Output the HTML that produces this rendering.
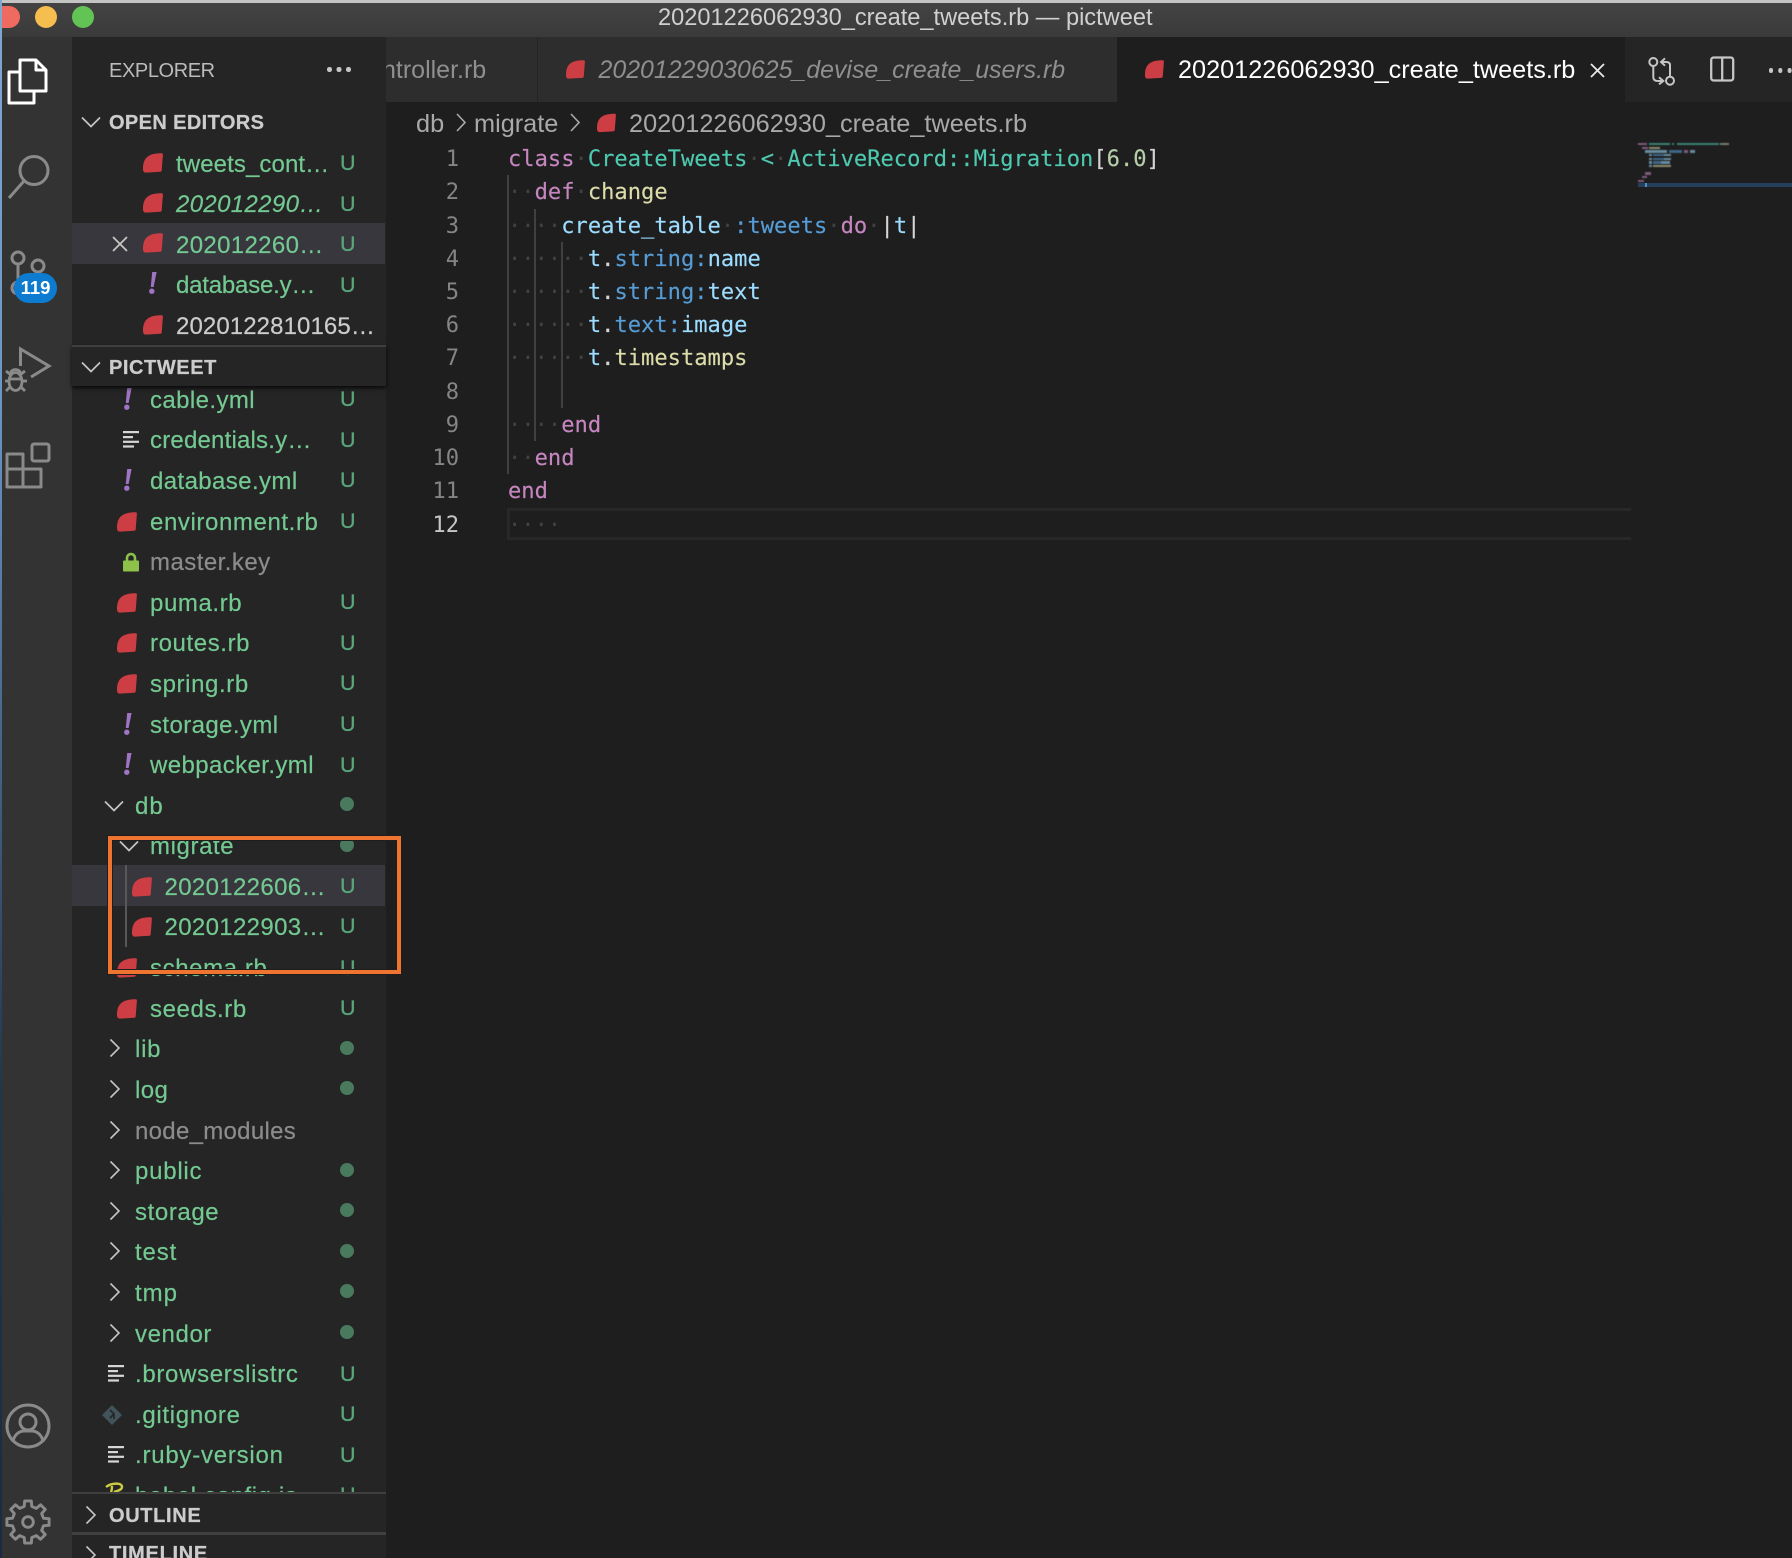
<!DOCTYPE html>
<html><head><meta charset="utf-8"><title>pictweet</title>
<style>
*{box-sizing:border-box}
html,body{margin:0;padding:0;background:#1e1e1e}
#app{position:relative;width:1792px;height:1558px;overflow:hidden;background:#1e1e1e;font-family:"Liberation Sans",sans-serif;color:#ccc}
.a{position:absolute;white-space:nowrap}
svg{position:absolute;overflow:visible}
.r{position:absolute;left:0;width:313px;height:40.6px;line-height:40.6px;font-size:24px;color:#73c991;white-space:nowrap}
.r .t{position:absolute;top:1px;letter-spacing:.6px;-webkit-text-stroke:.2px}
.l0 .t{left:63px}.l1 .t{left:78px}.l2 .t{left:92.5px;letter-spacing:.35px}.e .t{left:104px}
.r .u{position:absolute;left:268px;top:-.5px;font-size:21.5px;color:#5aa57a;-webkit-text-stroke:.3px}
.r .d{position:absolute;left:268px;top:11.5px;width:14px;height:14px;border-radius:50%;background:#4a7a5e}
.r svg.i{width:20px;height:20px;top:10px}
.l0 svg.i{left:30px}.l1 svg.i{left:45px}.l2 svg.i{left:60px}.e svg.i{left:71px}
.r svg.c{left:33px;top:9px;width:20px;height:20px}
.l1 svg.c{left:47px}
.l0 svg.dnn{left:32px;top:10px}.l1 svg.dnn{left:47px;top:10px}
.gy{color:#8c8c8c}
.r svg.x{width:8px;height:22px;top:8px}
.l1 svg.x{left:52px}.e svg.x{left:77px}
.h{position:absolute;left:37px;font-size:20px;font-weight:bold;color:#ccc;white-space:nowrap;-webkit-text-stroke:.25px}
pre{position:absolute;margin:0;left:508px;font:22.1px/33px "DejaVu Sans Mono",monospace;color:#d4d4d4;white-space:pre;-webkit-text-stroke:.15px}
.ws{color:#424242;-webkit-text-stroke:0}.k{color:#c586c0}.c{color:#4ec9b0}.f{color:#dcdcaa}.v{color:#9cdcfe}.b{color:#569cd6}.n{color:#b5cea8}
.ln{position:absolute;left:410px;width:49px;text-align:right;font:22.1px/33px "DejaVu Sans Mono",monospace;color:#858585}
.g{position:absolute;width:2px;background:#404040}
#mm{position:absolute;left:0;top:0;width:1792px;height:200px;filter:blur(.5px)}
.m{position:absolute;height:2.4px;opacity:.58}
</style></head><body>
<div id="app">
<svg width="0" height="0" style="position:absolute"><defs>
<symbol id="rb" viewBox="0 0 20 20"><path d="M18.6 .3 C19.6 .2 20 .9 19.9 2 L18.7 17.2 C18.6 18.3 18 18.7 17 18.8 L3 19.6 C1 19.7 0 18.4 0 16 C0 5 5 .3 18.6 .3 Z" fill="#cc3e44"/></symbol>
<symbol id="ls" viewBox="0 0 20 20"><g fill="#d4d7d6"><rect x="2" y="2" width="16" height="2.2"/><rect x="2" y="7" width="10" height="2.2"/><rect x="2" y="11.7" width="16" height="2.2"/><rect x="2" y="16.4" width="11" height="2.2"/></g></symbol>
<symbol id="dn" viewBox="0 0 20 20"><path d="M1 5.5 L10 14.5 L19 5.5" fill="none" stroke="#c5c5c5" stroke-width="1.7"/></symbol>
<symbol id="rt" viewBox="0 0 20 20"><path d="M5.5 1.5 L14 10 L5.5 18.5" fill="none" stroke="#c5c5c5" stroke-width="1.6"/></symbol>
<symbol id="ex" viewBox="0 0 8 22"><path d="M3.2 0 H7.6 L4.6 15 H1.8 Z" fill="#a074c4"/><circle cx="2.8" cy="19.2" r="2.7" fill="#a074c4"/></symbol>
</defs></svg>

<!-- title bar -->
<div class="a" style="left:0;top:0;width:1792px;height:37px;background:linear-gradient(#444,#3a3a3a)"></div>
<div class="a" style="left:0;top:0;width:1792px;height:3px;background:#c4c4c4"></div>
<div class="a" style="left:2px;top:6px;width:18px;height:22px;border-radius:0 11px 11px 0;background:#ef6b60"></div>
<div class="a" style="left:35px;top:6px;width:22px;height:22px;border-radius:50%;background:#f6bd4f"></div>
<div class="a" style="left:72px;top:6px;width:22px;height:22px;border-radius:50%;background:#61c454"></div>
<div class="a" style="left:658px;top:3px;line-height:30px;font-size:23.6px;color:#d0d0d0">20201226062930_create_tweets.rb — pictweet</div>

<!-- activity bar -->
<div class="a" style="left:0;top:37px;width:72px;height:1521px;background:#333"></div>
<div class="a" style="left:0;top:0;width:2px;height:1558px;background:linear-gradient(#7fa8d0 0,#6b97c6 25%,#20364f 70%,#1a2a44 100%)"></div>
<svg style="left:0;top:0" width="72" height="1558" fill="none">
<g stroke="#fff" stroke-width="3" stroke-linejoin="round">
<path d="M20 72 H9 V103 H34 V92"/>
<path d="M20 60 H36 L46 70 V91 H20 Z"/><path d="M36 60 V70 H46"/>
</g>
<g stroke="#8a8a8a" stroke-width="3">
<circle cx="34" cy="170.5" r="14"/><path d="M24 181 L9 198"/>
<circle cx="18" cy="258" r="6"/><circle cx="38" cy="266" r="6"/><circle cx="18" cy="288" r="6"/><path d="M18 264 V282"/>
<path d="M20.5 366 V349 L49 366 L31 377"/>
</g>
<g stroke="#8a8a8a" stroke-width="2.8">
<ellipse cx="15.5" cy="381.5" rx="6.5" ry="9"/><path d="M9 379 H22"/><path d="M10.5 374 C10.5 368 20.5 368 20.5 374"/>
<path d="M6 371 L11 375 M25 371 L20 375 M5 381 H9 M22 381 H27 M6 391 L10 387 M25 391 L21 387"/>
</g>
<g stroke="#8a8a8a" stroke-width="3" stroke-linejoin="round">
<rect x="32" y="444" width="17" height="17" rx="2"/>
<path d="M7 454 H23 V469 H41 V487 H7 Z"/><path d="M7 469 H23 V487"/>
</g>
<g stroke="#8a8a8a" stroke-width="3">
<circle cx="28" cy="1426" r="21"/><circle cx="28" cy="1422" r="8"/>
<path d="M13 1442 C14 1434 20 1431 24 1431 H32 C36 1431 42 1434 43 1442"/>
<g transform="translate(28 1522) scale(.97)">
<path d="M16.04 -3.85 L21.73 -3.44 L21.73 3.44 L16.04 3.85 L14.07 8.62 L17.8 12.93 L12.93 17.8 L8.62 14.07 L3.85 16.04 L3.44 21.73 L-3.44 21.73 L-3.85 16.04 L-8.62 14.07 L-12.93 17.8 L-17.8 12.93 L-14.07 8.62 L-16.04 3.85 L-21.73 3.44 L-21.73 -3.44 L-16.04 -3.85 L-14.07 -8.62 L-17.8 -12.93 L-12.93 -17.8 L-8.62 -14.07 L-3.85 -16.04 L-3.44 -21.73 L3.44 -21.73 L3.85 -16.04 L8.62 -14.07 L12.93 -17.8 L17.8 -12.93 L14.07 -8.62 Z" stroke-linejoin="round"/>
<circle r="5.5"/></g>
</g>
</svg>
<div class="a" style="left:14px;top:273px;width:43px;height:30px;border-radius:15px;background:#0c7bd0;color:#fff;font-size:18.5px;font-weight:bold;text-align:center;line-height:30px">119</div>

<!-- sidebar -->
<div class="a" id="sb" style="left:72px;top:37px;width:313.5px;height:1521px;background:#252526"></div>
<div class="a" style="left:109px;top:59px;font-size:20px;line-height:24px;color:#bbb;letter-spacing:-.4px">EXPLORER</div>
<div class="a" style="left:327px;top:67px;width:4.5px;height:4.5px;border-radius:50%;background:#c5c5c5;box-shadow:9.5px 0 #c5c5c5,19px 0 #c5c5c5"></div>

<div class="a" style="left:72px;top:0;width:314px;height:560px">
<svg style="left:9px;top:112px" width="20" height="20"><use href="#dn" width="20" height="20"/></svg>
<div class="h" style="top:111px;line-height:24px;letter-spacing:.38px">OPEN EDITORS</div>
<div class="r" style="top:223px;background:#37373d"></div>
<svg style="left:40px;top:236px" width="16" height="16"><path d="M1 1 L15 15 M15 1 L1 15" stroke="#c5c5c5" stroke-width="1.8" fill="none"/></svg>
<div class="r e" style="top:143px"><svg class="i"><use href="#rb" width="20" height="20"/></svg><span class="t" style="top:1.5px;letter-spacing:.1px">tweets_cont…</span><span class="u">U</span></div>
<div class="r e" style="top:183px"><svg class="i"><use href="#rb" width="20" height="20"/></svg><span class="t" style="top:2px;font-style:italic;letter-spacing:.35px">202012290…</span><span class="u" style="top:.5px">U</span></div>
<div class="r e" style="top:223px"><svg class="i"><use href="#rb" width="20" height="20"/></svg><span class="t" style="top:3px;letter-spacing:.35px">202012260…</span><span class="u" style="top:.5px">U</span></div>
<div class="r e" style="top:264px"><svg class="x"><use href="#ex" width="8" height="22"/></svg><span class="t" style="top:2px;letter-spacing:-.2px">database.y…</span><span class="u" style="top:.5px">U</span></div>
<div class="r e" style="top:305px"><svg class="i"><use href="#rb" width="20" height="20"/></svg><span class="t" style="top:2px;color:#ccc;letter-spacing:.1px">2020122810165…</span></div>
</div>

<!-- tree -->
<div class="a" style="left:72px;top:386px;width:314px;height:1106px;overflow:hidden">
<div class="a" style="left:0;top:-386px;width:314px;height:1600px">
<div class="r" style="top:865px;background:#37373d;height:41px"></div>
<div class="a" style="left:53px;top:865px;width:2px;height:82px;background:#585858"></div>
<div class="r l1" style="top:379.7px"><svg class="x"><use href="#ex" width="8" height="22"/></svg><span class="t" style="letter-spacing:.4px">cable.yml</span><span class="u">U</span></div>
<div class="r l1" style="top:420.3px"><svg class="i" style="left:49px;top:9px"><use href="#ls" width="20" height="20"/></svg><span class="t" style="letter-spacing:.2px">credentials.y…</span><span class="u">U</span></div>
<div class="r l1" style="top:460.9px"><svg class="x"><use href="#ex" width="8" height="22"/></svg><span class="t" style="letter-spacing:.4px">database.yml</span><span class="u">U</span></div>
<div class="r l1" style="top:501.5px"><svg class="i"><use href="#rb" width="20" height="20"/></svg><span class="t">environment.rb</span><span class="u">U</span></div>
<div class="r l1 gy" style="top:542.1px"><svg class="i" style="left:50px;width:18px" viewBox="0 0 18 20"><path d="M5 9 V6 a4 4 0 0 1 8 0 V9" fill="none" stroke="#8dc149" stroke-width="2.6"/><rect x="1" y="8.5" width="16" height="11" rx="1" fill="#8dc149"/></svg><span class="t" style="letter-spacing:.46px">master.key</span></div>
<div class="r l1" style="top:582.7px"><svg class="i"><use href="#rb" width="20" height="20"/></svg><span class="t">puma.rb</span><span class="u">U</span></div>
<div class="r l1" style="top:623.3px"><svg class="i"><use href="#rb" width="20" height="20"/></svg><span class="t">routes.rb</span><span class="u">U</span></div>
<div class="r l1" style="top:663.9px"><svg class="i"><use href="#rb" width="20" height="20"/></svg><span class="t">spring.rb</span><span class="u">U</span></div>
<div class="r l1" style="top:704.5px"><svg class="x"><use href="#ex" width="8" height="22"/></svg><span class="t" style="letter-spacing:.4px">storage.yml</span><span class="u">U</span></div>
<div class="r l1" style="top:745.1px"><svg class="x"><use href="#ex" width="8" height="22"/></svg><span class="t" style="letter-spacing:.4px">webpacker.yml</span><span class="u">U</span></div>
<div class="r l0" style="top:785.7px"><svg class="c dnn"><use href="#dn" width="20" height="20"/></svg><span class="t" style="letter-spacing:1px">db</span><span class="d"></span></div>
<div class="r l1" style="top:826.3px"><svg class="c dnn"><use href="#dn" width="20" height="20"/></svg><span class="t">migrate</span><span class="d"></span></div>
<div class="r l2" style="top:866.9px"><svg class="i"><use href="#rb" width="20" height="20"/></svg><span class="t">2020122606…</span><span class="u">U</span></div>
<div class="r l2" style="top:906.9px"><svg class="i"><use href="#rb" width="20" height="20"/></svg><span class="t">2020122903…</span><span class="u">U</span></div>
<div class="r l1" style="top:948.1px"><svg class="i"><use href="#rb" width="20" height="20"/></svg><span class="t">schema.rb</span><span class="u">U</span></div>
<div class="r l1" style="top:988.7px"><svg class="i"><use href="#rb" width="20" height="20"/></svg><span class="t">seeds.rb</span><span class="u">U</span></div>
<div class="r l0" style="top:1029.3px"><svg class="c"><use href="#rt" width="20" height="20"/></svg><span class="t" style="letter-spacing:.75px">lib</span><span class="d"></span></div>
<div class="r l0" style="top:1069.9px"><svg class="c"><use href="#rt" width="20" height="20"/></svg><span class="t" style="letter-spacing:.4px">log</span><span class="d"></span></div>
<div class="r l0 gy" style="top:1110.5px"><svg class="c"><use href="#rt" width="20" height="20"/></svg><span class="t" style="letter-spacing:.3px">node_modules</span></div>
<div class="r l0" style="top:1151.1px"><svg class="c"><use href="#rt" width="20" height="20"/></svg><span class="t" style="letter-spacing:.76px">public</span><span class="d"></span></div>
<div class="r l0" style="top:1191.7px"><svg class="c"><use href="#rt" width="20" height="20"/></svg><span class="t">storage</span><span class="d"></span></div>
<div class="r l0" style="top:1232.3px"><svg class="c"><use href="#rt" width="20" height="20"/></svg><span class="t" style="letter-spacing:.85px">test</span><span class="d"></span></div>
<div class="r l0" style="top:1272.9px"><svg class="c"><use href="#rt" width="20" height="20"/></svg><span class="t" style="letter-spacing:1px">tmp</span><span class="d"></span></div>
<div class="r l0" style="top:1313.5px"><svg class="c"><use href="#rt" width="20" height="20"/></svg><span class="t">vendor</span><span class="d"></span></div>
<div class="r l0" style="top:1354.1px"><svg class="i" style="left:34px;top:9px"><use href="#ls" width="20" height="20"/></svg><span class="t" style="letter-spacing:.68px">.browserslistrc</span><span class="u">U</span></div>
<div class="r l0" style="top:1394.7px"><svg class="i" viewBox="0 0 20 20"><path d="M10 0 L20 10 L10 20 L0 10 Z" fill="#41535b"/><path d="M8 5 L12 9 V14 M12 9 L8 13" stroke="#252526" stroke-width="1.6" fill="none"/></svg><span class="t" style="letter-spacing:.69px">.gitignore</span><span class="u">U</span></div>
<div class="r l0" style="top:1435.3px"><svg class="i" style="left:34px;top:9px"><use href="#ls" width="20" height="20"/></svg><span class="t" style="letter-spacing:.77px">.ruby-version</span><span class="u">U</span></div>
<div class="r l0" style="top:1475.9px"><svg class="i" style="left:33px;top:7px" viewBox="0 0 20 20"><path d="M1 4 C6 0 17 -1 17 4 C17 7 12 8 9 9 C14 9 17 11 15 15 C12 19 6 19 3 18 M7 3 C7 8 5 14 2 20" fill="none" stroke="#cbcb41" stroke-width="2.4"/></svg><span class="t">babel.config.js</span><span class="u">U</span></div>
</div></div>

<!-- section headers -->
<div class="a" style="left:72px;top:345px;width:313.5px;height:41px;background:#252526;border-top:2.5px solid #3f3f3f;box-shadow:0 2px 4px #000c"></div>
<svg style="left:81px;top:357px" width="20" height="20"><use href="#dn" width="20" height="20"/></svg>
<div class="h" style="left:109px;top:356px;line-height:24px;letter-spacing:.57px">PICTWEET</div>

<div class="a" style="left:72px;top:1492px;width:313.5px;height:66px;background:#252526;border-top:2.5px solid #3f3f3f"></div>
<div class="a" style="left:72px;top:1532px;width:313.5px;height:2.5px;background:#3f3f3f"></div>
<svg style="left:81px;top:1505px" width="20" height="20"><use href="#rt" width="20" height="20"/></svg>
<div class="h" style="left:109px;top:1504px;line-height:24px;letter-spacing:.65px">OUTLINE</div>
<svg style="left:81px;top:1545px" width="20" height="20"><use href="#rt" width="20" height="20"/></svg>
<div class="h" style="left:109px;top:1542px;line-height:24px;letter-spacing:.7px">TIMELINE</div>

<!-- tabs -->
<div class="a" style="left:385.5px;top:37px;width:1406.5px;height:65px;background:#252526"></div>
<div class="a" style="left:385.5px;top:37px;width:151px;height:65px;background:#2d2d2d;overflow:hidden"><span class="a" style="left:-3.5px;top:0;line-height:66px;font-size:25px;color:#8f8f8f">ntroller.rb</span></div>
<div class="a" style="left:538px;top:37px;width:579px;height:65px;background:#2d2d2d"></div>
<div class="a" style="left:1117px;top:37px;width:508px;height:65px;background:#1e1e1e"></div>
<svg style="left:566px;top:59px" width="19" height="21"><use href="#rb" width="19" height="21"/></svg>
<div class="a" style="left:598.5px;top:37px;line-height:67px;font-size:24.92px;font-style:italic;color:#8f8f8f">20201229030625_devise_create_users.rb</div>
<svg style="left:1145px;top:59px" width="19" height="21"><use href="#rb" width="19" height="21"/></svg>
<div class="a" style="left:1178px;top:37px;line-height:66px;font-size:25.25px;color:#fff">20201226062930_create_tweets.rb</div>
<svg style="left:1590px;top:63px" width="15" height="15"><path d="M1 1 L14 14 M14 1 L1 14" stroke="#e8e8e8" stroke-width="1.8" fill="none"/></svg>
<svg style="left:1650px;top:56px" width="28" height="32" fill="none" stroke="#c5c5c5" stroke-width="2">
<circle cx="3.3" cy="6" r="4"/><circle cx="20" cy="24.7" r="4"/>
<path d="M3.3 10 V21 C3.3 24 5 25 8 25 H13.3 M9 21.3 L13.3 25 L9 28.3"/>
<path d="M20 20.7 V9 C20 7 18.5 6 16 6 H11 M15 2.3 L11 6 L15 9.7"/>
</svg>
<svg style="left:1710px;top:56px" width="26" height="26" fill="none" stroke="#c5c5c5" stroke-width="2.3"><rect x="1.2" y="1.5" width="22" height="23" rx="2.5"/><path d="M12.2 1.5 V24.5"/></svg>
<div class="a" style="left:1768.5px;top:68px;width:4.5px;height:4.5px;border-radius:50%;background:#c5c5c5;box-shadow:9.3px 0 #c5c5c5,18.6px 0 #c5c5c5"></div>

<!-- breadcrumbs -->
<div class="a" style="left:416px;top:106.5px;line-height:34px;font-size:25.3px;color:#a9a9a9">db</div>
<svg style="left:455px;top:113px" width="12" height="20"><path d="M2 1 L10 9.5 L2 18" stroke="#a9a9a9" stroke-width="1.6" fill="none"/></svg>
<div class="a" style="left:474px;top:106.5px;line-height:34px;font-size:25.3px;color:#a9a9a9">migrate</div>
<svg style="left:569px;top:113px" width="12" height="20"><path d="M2 1 L10 9.5 L2 18" stroke="#a9a9a9" stroke-width="1.6" fill="none"/></svg>
<svg style="left:597px;top:113px" width="19" height="20"><use href="#rb" width="19" height="20"/></svg>
<div class="a" style="left:629px;top:106.5px;line-height:34px;font-size:25.3px;color:#a9a9a9">20201226062930_create_tweets.rb</div>

<!-- editor -->
<div class="a" style="left:507px;top:508px;width:1124px;height:32px;border:3px solid #282828;border-right:0"></div>
<div class="g" style="left:507px;top:175px;height:299px"></div>
<div class="g" style="left:533.5px;top:209px;height:232px"></div>
<div class="g" style="left:561px;top:242px;height:166px"></div>
<div class="ln" style="top:143px">1</div>
<div class="ln" style="top:176px">2</div>
<div class="ln" style="top:210px">3</div>
<div class="ln" style="top:243px">4</div>
<div class="ln" style="top:276px">5</div>
<div class="ln" style="top:309px">6</div>
<div class="ln" style="top:342px">7</div>
<div class="ln" style="top:376px">8</div>
<div class="ln" style="top:409px">9</div>
<div class="ln" style="top:442px">10</div>
<div class="ln" style="top:475px">11</div>
<div class="ln" style="top:509px;color:#c6c6c6">12</div>
<pre style="top:143px"><span class="k">class</span><span class="ws">·</span><span class="c">CreateTweets</span><span class="ws">·</span><span class="c">&lt;</span><span class="ws">·</span><span class="c">ActiveRecord::Migration</span>[<span class="n">6.0</span>]</pre>
<pre style="top:176px"><span class="ws">··</span><span class="k">def</span><span class="ws">·</span><span class="f">change</span></pre>
<pre style="top:210px"><span class="ws">····</span><span class="v">create_table</span><span class="ws">·</span><span class="b">:tweets</span><span class="ws">·</span><span class="k">do</span><span class="ws">·</span>|<span class="v">t</span>|</pre>
<pre style="top:243px"><span class="ws">······</span><span class="v">t</span>.<span class="b">string:</span><span class="v">name</span></pre>
<pre style="top:276px"><span class="ws">······</span><span class="v">t</span>.<span class="b">string:</span><span class="v">text</span></pre>
<pre style="top:309px"><span class="ws">······</span><span class="v">t</span>.<span class="b">text:</span><span class="v">image</span></pre>
<pre style="top:342px"><span class="ws">······</span><span class="v">t</span>.<span class="f">timestamps</span></pre>
<pre style="top:409px"><span class="ws">····</span><span class="k">end</span></pre>
<pre style="top:442px"><span class="ws">··</span><span class="k">end</span></pre>
<pre style="top:475px"><span class="k">end</span></pre>
<pre style="top:509px"><span class="ws">····</span></pre>

<!-- minimap -->
<div class="a" style="left:1638px;top:183px;width:154px;height:4px;background:#264f78;opacity:.7"></div>
<div id="mm">
<div class="m" style="left:1638px;top:142.5px;width:9px;background:#c586c0"></div>
<div class="m" style="left:1649px;top:142.5px;width:21px;background:#4ec9b0"></div>
<div class="m" style="left:1672px;top:142.5px;width:2px;background:#4ec9b0"></div>
<div class="m" style="left:1677px;top:142.5px;width:42px;background:#4ec9b0"></div>
<div class="m" style="left:1720px;top:142.5px;width:9px;background:#b5c0a8"></div>
<div class="m" style="left:1642px;top:146.5px;width:5.5px;background:#c586c0"></div>
<div class="m" style="left:1649px;top:146.5px;width:11px;background:#dcdcaa"></div>
<div class="m" style="left:1645.4px;top:150.2px;width:22px;background:#9cdcfe"></div>
<div class="m" style="left:1669px;top:150.2px;width:13px;background:#569cd6"></div>
<div class="m" style="left:1684px;top:150.2px;width:4px;background:#c586c0"></div>
<div class="m" style="left:1690px;top:150.2px;width:5px;background:#9cdcfe"></div>
<div class="m" style="left:1649px;top:153.9px;width:3px;background:#9cdcfe"></div>
<div class="m" style="left:1653px;top:153.9px;width:11px;background:#569cd6"></div>
<div class="m" style="left:1664px;top:153.9px;width:7px;background:#9cdcfe"></div>
<div class="m" style="left:1649px;top:157.5px;width:3px;background:#9cdcfe"></div>
<div class="m" style="left:1653px;top:157.5px;width:11px;background:#569cd6"></div>
<div class="m" style="left:1664px;top:157.5px;width:7px;background:#9cdcfe"></div>
<div class="m" style="left:1649px;top:161.2px;width:3px;background:#9cdcfe"></div>
<div class="m" style="left:1653px;top:161.2px;width:8px;background:#569cd6"></div>
<div class="m" style="left:1661px;top:161.2px;width:9px;background:#9cdcfe"></div>
<div class="m" style="left:1649px;top:164.9px;width:3px;background:#9cdcfe"></div>
<div class="m" style="left:1653px;top:164.9px;width:18px;background:#dcdcaa"></div>
<div class="m" style="left:1645.4px;top:172.2px;width:5.5px;background:#c586c0"></div>
<div class="m" style="left:1641.7px;top:175.9px;width:5.5px;background:#c586c0"></div>
<div class="m" style="left:1638px;top:179.6px;width:5.5px;background:#c586c0"></div>
</div>
<div class="a" style="left:1645px;top:183px;width:1.5px;height:4px;background:#4f8fc0"></div>

<!-- orange annotation -->
<div class="a" style="left:108px;top:836px;width:293px;height:138px;border:4.5px solid #ee7430;box-shadow:0 0 0 1px #1e1e1e,inset 0 0 0 1px #1e1e1e"></div>
</div>
</body></html>
